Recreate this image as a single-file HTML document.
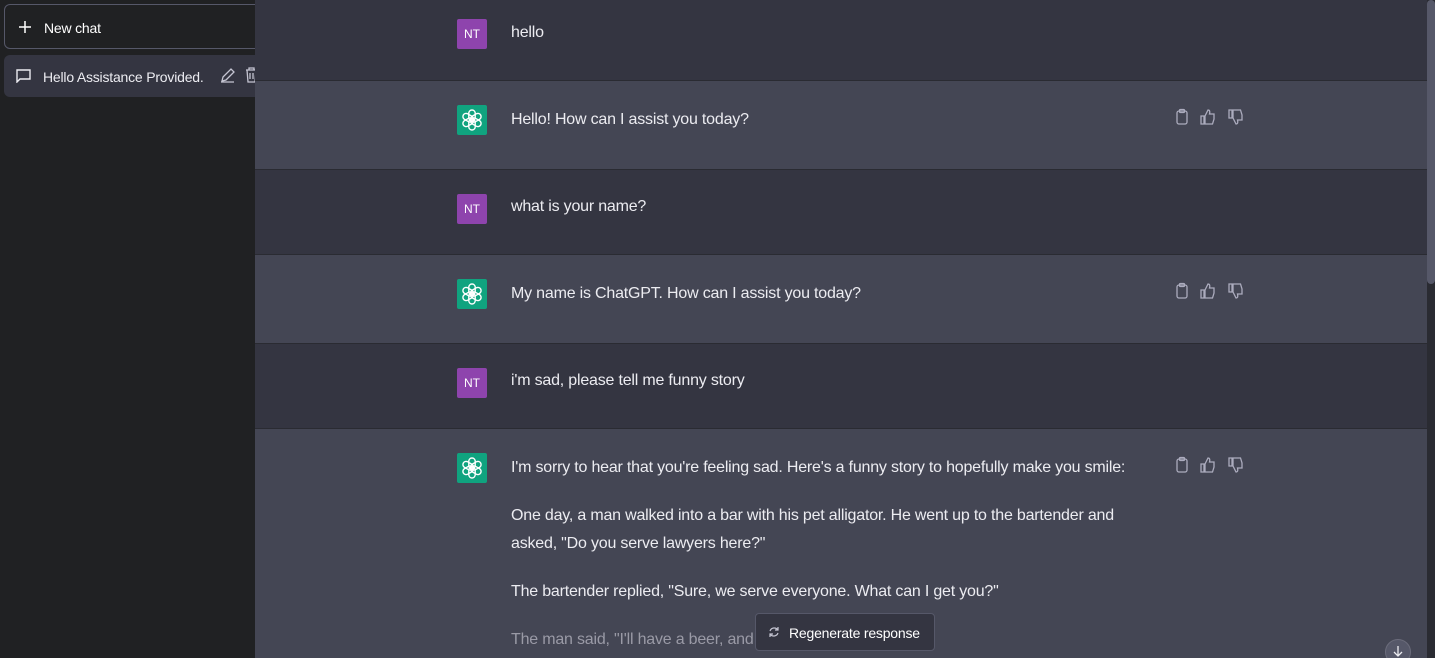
<!DOCTYPE html>
<html><head><style>
*{margin:0;padding:0;box-sizing:border-box}
html,body{width:1435px;height:658px;overflow:hidden}
body{background:#343541;font-family:"Liberation Sans",sans-serif;position:relative;color:#ececf1}
.side{position:absolute;left:0;top:0;width:255px;height:658px;background:#202123;overflow:hidden}
.nc{position:absolute;left:4px;top:4px;width:270px;height:45px;border:1px solid #565869;border-radius:6px;color:#fff;font-size:14px}
.nc span{position:absolute;left:39px;top:15px;letter-spacing:-0.2px}
.item{position:absolute;left:4px;top:55px;width:270px;height:42px;background:#343541;border-radius:6px;font-size:14px}
.item .t{position:absolute;left:39px;top:14px;color:#ececf1;width:168px;white-space:nowrap;overflow:hidden;letter-spacing:-0.2px}
.main{position:absolute;left:255px;top:0;width:1172px;height:658px;overflow:hidden}
.row{position:absolute;left:0;width:1172px;border-bottom:1px solid #2a2b32}
.u{background:#343541}.a{background:#444654}
.av{position:absolute;left:202px;width:30px;height:30px;border-radius:2px;font-size:12px;color:#fff;text-align:center;line-height:30px}
.nt{background:#8e44ad}.gp{background:#10a37f}
.txt{position:absolute;left:256px;font-size:16px;color:#ececf1;line-height:28px;width:640px;letter-spacing:-0.2px}
.txt p{margin-bottom:20px}
.ic{position:absolute;left:918px}
.sb{position:absolute;left:1427px;top:0;width:8px;height:658px;background:#2a2b32}
.th{position:absolute;left:1427px;top:0;width:8px;height:284px;background:#565869;border-radius:4px}
.regen{position:absolute;left:755px;top:613px;width:180px;height:38px;border:1px solid #565869;border-radius:4px;background:#343541;font-size:14px;color:#fff}
.regen span{position:absolute;left:33px;top:11px;letter-spacing:-0.2px}
.down{position:absolute;left:1385px;top:639px;width:26px;height:26px;border-radius:50%;background:#565869;border:1px solid #6b6c7b}
</style></head><body>
<svg width="0" height="0" style="position:absolute"><defs><g id="lg" fill="none" stroke="#fff" stroke-width="1.4"><g id="pt"><rect x="-3.2" y="-9" width="6.4" height="11" rx="3.2" transform="translate(0,-1)"/></g><use href="#pt" transform="rotate(60)"/><use href="#pt" transform="rotate(120)"/><use href="#pt" transform="rotate(180)"/><use href="#pt" transform="rotate(240)"/><use href="#pt" transform="rotate(300)"/></g></defs></svg>
<div class="side">
 <div class="nc"><svg style="position:absolute;left:13px;top:15px" width="14" height="14" viewBox="0 0 14 14" stroke="#fff" stroke-width="1.5"><path d="M7 1v12M1 7h12"/></svg><span>New chat</span></div>
 <div class="item"><svg style="position:absolute;left:12px;top:14px" width="15" height="14" viewBox="0 0 15 14" fill="none" stroke="#ececf1" stroke-width="1.4"><path d="M1 1h13v9H4l-3 3z"/></svg><div class="t">Hello Assistance Provided.</div>
 <svg style="position:absolute;left:216px;top:13px" width="15" height="15" viewBox="0 0 15 15" fill="none" stroke="#c5c5d2" stroke-width="1.3"><path d="M2 13l1-4 8-8 3 3-8 8zM1 14h13"/></svg>
 <svg style="position:absolute;left:241px;top:12px" width="13" height="16" viewBox="0 0 13 16" fill="none" stroke="#c5c5d2" stroke-width="1.3"><path d="M1 3h11M4 3V1h5v2M2 3l1 12h7l1-12M5 6v6M8 6v6"/></svg></div>
</div>
<div class="main">
 <div class="row u" style="top:0;height:81px"><div class="av nt" style="top:19px">NT</div><div class="txt" style="top:19px">hello</div></div>
 <div class="row a" style="top:81px;height:89px"><div class="av gp" style="top:24px"><svg width="30" height="30" viewBox="-15 -15 30 30"><use href="#lg"/></svg></div><div class="txt" style="top:25px">Hello! How can I assist you today?</div><div class="ic" style="top:27px"><svg width="80" height="18" viewBox="0 0 80 18" fill="none" stroke="#acacbe" stroke-width="1.3"><rect x="4" y="3" width="10" height="13" rx="2"/><rect x="6.5" y="1.5" width="5" height="3" rx="1"/><path d="M32 8l3-6c2 0 2 2 1.5 4H41v5l-1.5 5H32zM28 8h3v8h-3z"/><path d="M60 10l3 6c2 0 2-2 1.5-4H69V7l-1.5-5H60zM56 10h3V2h-3z"/></svg></div></div>
 <div class="row u" style="top:170px;height:85px"><div class="av nt" style="top:24px">NT</div><div class="txt" style="top:23px">what is your name?</div></div>
 <div class="row a" style="top:255px;height:89px"><div class="av gp" style="top:24px"><svg width="30" height="30" viewBox="-15 -15 30 30"><use href="#lg"/></svg></div><div class="txt" style="top:25px">My name is ChatGPT. How can I assist you today?</div><div class="ic" style="top:27px"><svg width="80" height="18" viewBox="0 0 80 18" fill="none" stroke="#acacbe" stroke-width="1.3"><rect x="4" y="3" width="10" height="13" rx="2"/><rect x="6.5" y="1.5" width="5" height="3" rx="1"/><path d="M32 8l3-6c2 0 2 2 1.5 4H41v5l-1.5 5H32zM28 8h3v8h-3z"/><path d="M60 10l3 6c2 0 2-2 1.5-4H69V7l-1.5-5H60zM56 10h3V2h-3z"/></svg></div></div>
 <div class="row u" style="top:344px;height:85px"><div class="av nt" style="top:24px">NT</div><div class="txt" style="top:23px">i'm sad, please tell me funny story</div></div>
 <div class="row a" style="top:429px;height:229px;border:none"><div class="av gp" style="top:24px"><svg width="30" height="30" viewBox="-15 -15 30 30"><use href="#lg"/></svg></div>
 <div class="txt" style="top:25px"><p>I'm sorry to hear that you're feeling sad. Here's a funny story to hopefully make you smile:</p><p>One day, a man walked into a bar with his pet alligator. He went up to the bartender and asked, "Do you serve lawyers here?"</p><p>The bartender replied, "Sure, we serve everyone. What can I get you?"</p><p style="color:#9a9aa6">The man said, "I'll have a beer, and get my alligator a lawyer."</p></div>
 <div class="ic" style="top:27px"><svg width="80" height="18" viewBox="0 0 80 18" fill="none" stroke="#acacbe" stroke-width="1.3"><rect x="4" y="3" width="10" height="13" rx="2"/><rect x="6.5" y="1.5" width="5" height="3" rx="1"/><path d="M32 8l3-6c2 0 2 2 1.5 4H41v5l-1.5 5H32zM28 8h3v8h-3z"/><path d="M60 10l3 6c2 0 2-2 1.5-4H69V7l-1.5-5H60zM56 10h3V2h-3z"/></svg></div></div>
</div>
<div class="sb"></div><div class="th"></div>
<div class="regen"><svg style="position:absolute;left:12px;top:12px" width="12" height="12" viewBox="0 0 12 12" fill="none" stroke="#c5c5d2" stroke-width="1.2"><path d="M10 4A4.5 4.5 0 0 0 2 5M2 8a4.5 4.5 0 0 0 8-1M10 1v3H7M2 11V8h3"/></svg><span>Regenerate response</span></div>
<div class="down"><svg style="position:absolute;left:6px;top:5px" width="12" height="12" viewBox="0 0 12 12" fill="none" stroke="#ececf1" stroke-width="1.3"><path d="M6 1v10M2 7l4 4 4-4"/></svg></div>
</body></html>
